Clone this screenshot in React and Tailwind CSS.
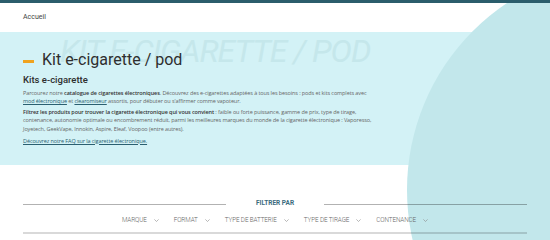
const filters = ["Marque", "Format", "Type de batterie", "Type de tirage", "Contenance"];

function Chevron() {
  return (
    <svg width="5" height="3" viewBox="0 0 5 3" className="ml-[7px] mb-[2px]">
      <path d="M0.4 0.4 L2.5 2.5 L4.6 0.4" fill="none" stroke="#8a8a8a" strokeWidth="0.6" />
    </svg>
  );
}

function Link({ children }) {
  return <a href="#" className="text-[#2a5f70] underline underline-offset-1">{children}</a>;
}

export default function App() {
  return (
    <div className="relative w-full h-[240px] overflow-hidden bg-white font-['Roboto',sans-serif]">
      <div className="relative z-10 h-[3px] bg-[#2b5d6c]" />
      {/* decorative background circle */}
      <div className="absolute left-[407px] top-[-35px] w-[450px] h-[450px] rounded-full bg-[#c2e7eb]" />

      <nav className="relative h-[29px] flex items-center px-[23px] text-[7px] text-[#444]">
        Accueil
      </nav>

      <section className="h-[133px] bg-[#d3f2f6] px-[23px]">
        <div className="relative pt-[20px]">
          <div className="absolute left-[37px] top-[3px] text-[32px] leading-none italic uppercase tracking-[-1px] text-[#c5e7eb] whitespace-nowrap select-none">
            Kit e-cigarette / pod
          </div>
          <h1 className="relative flex items-center h-[16px] text-[16px] text-[#2e2e2e]">
            <span className="inline-block w-[11px] h-[3px] bg-[#f0a31e] mr-[8px] mt-[3px]" />
            Kit e-cigarette / pod
          </h1>
          <h2 className="relative mt-[6px] text-[9.5px] leading-[11px] font-medium text-[#2e2e2e]">
            Kits e-cigarette
          </h2>
          <div className="relative mt-[4px] font-['Open_Sans',sans-serif] text-[5.5px] leading-[8.4px] tracking-[-0.1px] text-[#666] whitespace-nowrap">
            <p>
              Parcourez notre <b className="font-semibold text-[#333]">catalogue de cigarettes électroniques</b>. Découvrez des e-cigarettes adaptées à tous les besoins : pods et kits complets avec
              <br />
              <Link>mod électronique</Link> et <Link>clearomiseur</Link> assortis, pour débuter ou s'affirmer comme vapoteur.
            </p>
            <p className="mt-[2px]">
              <b className="font-semibold text-[#333]">Filtrez les produits pour trouver la cigarette électronique qui vous convient</b> : faible ou forte puissance, gamme de prix, type de tirage,
              <br />
              contenance, autonomie optimale ou encombrement réduit, parmi les meilleures marques du monde de la cigarette électronique : Vaporesso,
              <br />
              Joyetech, GeekVape, Innokin, Aspire, Eleaf, Voopoo (entre autres).
            </p>
            <p className="mt-[3.5px]">
              <Link>Découvrez notre FAQ sur la cigarette électronique.</Link>
            </p>
          </div>
        </div>
      </section>

      <section className="relative px-[23px] pt-[35px]">
        <div className="flex items-center h-[8px]">
          <div className="flex-1 h-px bg-black/30" />
          <span className="mx-[30px] text-[6.5px] font-bold uppercase text-[#3b6b7e]">Filtrer par</span>
          <div className="flex-1 h-px bg-black/30" />
        </div>
        <div className="mt-[9px] h-[8px] flex items-center justify-center gap-[15px] text-[6.3px] font-light uppercase text-[#666] tracking-[-0.1px]">
          {filters.map((f) => (
            <div key={f} className="flex items-center">
              {f}
              <Chevron />
            </div>
          ))}
        </div>
        <div className="mt-[7px] h-[2px] bg-black/15" />
      </section>
    </div>
  );
}
